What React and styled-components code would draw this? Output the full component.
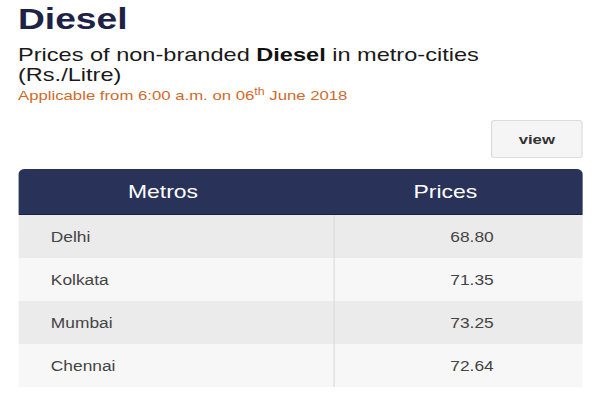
import React from "react";
import styled, { createGlobalStyle } from "styled-components";

const STRETCH = 600 / 484;

const GlobalStyle = createGlobalStyle`
  body {
    margin: 0;
    background: #ffffff;
    overflow: hidden;
    font-family: Arial, "Liberation Sans", Helvetica, sans-serif;
  }
`;

const Page = styled.div`
  width: 484px;
  height: 400px;
  padding: 0 14px 0 14.5px;
  box-sizing: border-box;
  transform: scaleX(${STRETCH});
  transform-origin: 0 0;
`;

const Title = styled.h1`
  margin: 0;
  padding-top: 1px;
  font-size: 30px;
  line-height: 36px;
  font-weight: bold;
  color: #1e2346;
`;

const Subtitle = styled.h2`
  margin: 8px 0 0;
  font-size: 19px;
  line-height: 20px;
  font-weight: normal;
  color: #1a1a1a;

  b {
    font-weight: bold;
    color: #111;
  }
`;

const Applicable = styled.p`
  margin: 3px 0 0;
  font-size: 13.5px;
  line-height: 16px;
  color: #cf6a2c;

  sup {
    font-size: 10px;
    line-height: 0;
  }
`;

const Toolbar = styled.div`
  display: flex;
  justify-content: flex-end;
  margin-top: 16px;
`;

const ViewButton = styled.button`
  width: 74px;
  height: 38px;
  border: 1px solid #dcdcdc;
  border-radius: 3px;
  background: #f5f5f5;
  font-family: inherit;
  font-size: 13.5px;
  font-weight: bold;
  color: #333;
`;

const Table = styled.div`
  margin-top: 11px;
`;

const HeadRow = styled.div`
  display: grid;
  grid-template-columns: 254px 1fr;
  height: 46px;
  background: #293258;
  border-radius: 5px 5px 0 0;
  border-bottom: 1px solid #1b2140;
  box-sizing: border-box;
`;

const HeadCell = styled.div`
  display: flex;
  align-items: center;
  justify-content: center;
  padding-right: 20px;
  color: #fff;
  font-size: 18.5px;
`;

const Row = styled.div`
  display: grid;
  grid-template-columns: 254px 1fr;
  height: 43px;
  background: ${(p) => (p.$odd ? "#ebebeb" : "#f7f7f7")};
`;

const Cell = styled.div`
  display: flex;
  align-items: center;
  color: #444;
  font-size: 14px;
  ${(p) =>
    p.$num
      ? `justify-content: center; padding-left: 22px; border-left: 1px solid #dddddd;`
      : `padding-left: 26.5px;`}
`;

const rows = [
  ["Delhi", "68.80"],
  ["Kolkata", "71.35"],
  ["Mumbai", "73.25"],
  ["Chennai", "72.64"],
];

export default function App() {
  return (
    <>
      <GlobalStyle />
      <Page>
        <Title>Diesel</Title>
        <Subtitle>
          Prices of non-branded <b>Diesel</b> in metro-cities
          <br />
          (Rs./Litre)
        </Subtitle>
        <Applicable>
          Applicable from 6:00 a.m. on 06<sup>th</sup> June 2018
        </Applicable>
        <Toolbar>
          <ViewButton>view</ViewButton>
        </Toolbar>
        <Table>
          <HeadRow>
            <HeadCell>Metros</HeadCell>
            <HeadCell>Prices</HeadCell>
          </HeadRow>
          {rows.map(([city, price], i) => (
            <Row key={city} $odd={i % 2 === 0}>
              <Cell>{city}</Cell>
              <Cell $num>{price}</Cell>
            </Row>
          ))}
        </Table>
      </Page>
    </>
  );
}
